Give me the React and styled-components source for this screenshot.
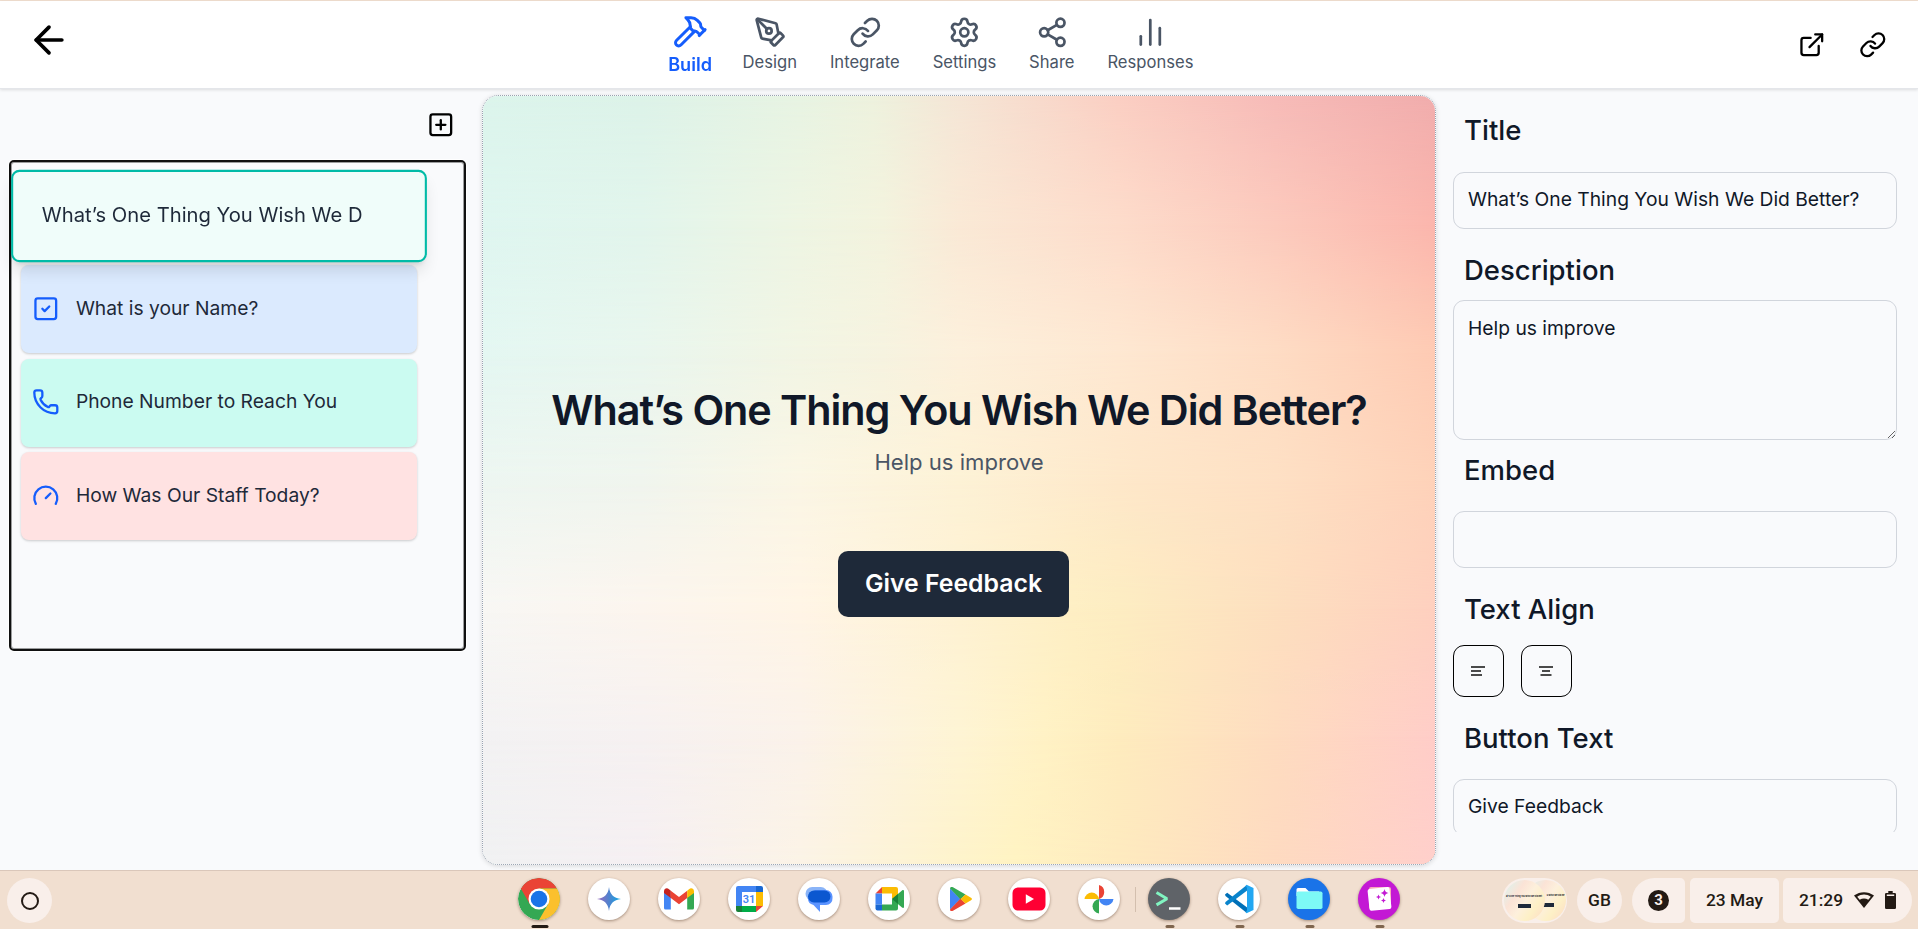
import React from 'react';
import styled, { createGlobalStyle, css } from 'styled-components';
import {
  ArrowLeft,
  ChartNoAxesColumn,
  ExternalLink,
  Gauge,
  Hammer,
  Link,
  PenTool,
  Phone,
  Settings,
  Share2,
  SquareCheck,
  SquarePlus,
} from 'lucide-react';

const GlobalStyle = createGlobalStyle`
  *, *::before, *::after { box-sizing: border-box; }
  body {
    margin: 0;
    background: #f9fafc;
    color: #101828;
    font-family: Inter, "Liberation Sans", sans-serif;
    overflow: hidden;
  }
`;

const Screen = styled.div`
  display: flex;
  flex-direction: column;
  width: 100%;
  height: 929px;
  border-top: 1px solid #f1dfd0;
`;

/* ---------- header ---------- */

const Header = styled.header`
  flex: none;
  display: grid;
  grid-template-columns: 1fr auto 1fr;
  height: 88px;
  background: #fff;
  border-bottom: 1px solid #e4e6ea;
  box-shadow: 0 1px 3px rgba(0, 0, 0, 0.12);
  position: relative;
`;

const BackLink = styled.a`
  display: flex;
  align-self: start;
  justify-self: start;
  margin: 17px 0 0 27px;
  color: #000;
`;

const Nav = styled.nav`
  display: flex;
  gap: 32.9px;
  padding-top: 15px;
  margin-right: 55px;
`;

const NavItem = styled.a`
  display: flex;
  flex-direction: column;
  align-items: center;
  align-self: flex-start;
  color: ${(p) => (p.$active ? '#155dfc' : '#4a5565')};
  font-size: 16.6px;
  font-weight: ${(p) => (p.$active ? 600 : 400)};
  line-height: 24px;
  transform: ${(p) => (p.$active ? 'scale(1.09)' : 'none')};

  svg { margin-bottom: ${(p) => (p.$active ? 2 : 1.5)}px; }
`;

const HeaderActions = styled.div`
  display: flex;
  justify-content: flex-end;
  gap: 33.4px;
  padding: 29.7px 31.5px 0 0;
  color: #000;
`;

/* ---------- workspace ---------- */

const Workspace = styled.main`
  flex: none;
  display: flex;
  align-items: flex-start;
  height: 781px;
`;

const Sidebar = styled.aside`
  width: 482px;
  padding: 21.7px 0 0 9px;
`;

const AddRow = styled.div`
  display: flex;
  justify-content: flex-end;
  height: 49.3px;
  padding-right: 27.7px;
  color: #000;
`;

const QuestionList = styled.div`
  display: flex;
  flex-direction: column;
  gap: 5.3px;
  width: 457px;
  height: 491px;
  padding: 10px 0 0 10px;
  border: 2px solid #101010;
  border-radius: 5px;
  box-shadow: 0 0 0 1px #fff, inset 0 0 0 1px rgba(16, 16, 16, 0.4);
`;

const Question = styled.div`
  flex: none;
  display: flex;
  align-items: center;
  gap: 16.3px;
  width: 396px;
  height: 88px;
  padding: 0 0 2.5px ${(p) => (p.$selected ? '27.3px' : '11px')};
  border-radius: 8px;
  background: ${(p) => p.$tone};
  color: #1e2939;
  font-size: 19.25px;
  box-shadow: 0 1px 3px rgba(0, 0, 0, 0.12), 0 1px 2px rgba(0, 0, 0, 0.08);

  svg { color: #155dfc; position: relative; top: 0.7px; }

  ${(p) =>
    p.$selected &&
    css`
      border: 2px solid #00bba7;
      transform: scale(1.05);
      box-shadow: 0 10px 15px -3px rgba(0, 0, 0, 0.12), 0 4px 6px -4px rgba(0, 0, 0, 0.12);
      z-index: 1;
    `}
`;

/* ---------- preview ---------- */

const Preview = styled.section`
  display: grid;
  width: 954px;
  height: 770px;
  margin-top: 6px;
  overflow: hidden;
  border: 1px dotted #9aa3b0;
  border-radius: 16px;
  box-shadow: 0 1px 5px rgba(0, 0, 0, 0.14);
`;

const Wash = styled.div`
  grid-area: 1 / 1;
  background: linear-gradient(to right, ${(p) => p.$colors.join(', ')});
  ${(p) =>
    p.$step > 0 &&
    css`
      mask-image: linear-gradient(
        to bottom,
        transparent ${((p.$step - 1) / 6) * 100}%,
        #000 ${(p.$step / 6) * 100}%
      );
    `}
`;

const PreviewContent = styled.div`
  grid-area: 1 / 1;
  display: flex;
  flex-direction: column;
  align-items: center;
  padding-top: 288.5px;
  position: relative;
`;

const PreviewTitle = styled.h1`
  margin: 0;
  font-size: 41.35px;
  font-weight: 600;
  line-height: 50px;
  letter-spacing: -0.0255em;
  color: #101828;
  white-space: nowrap;
`;

const PreviewText = styled.p`
  margin: 10px 0 0;
  font-size: 22.1px;
  line-height: 34px;
  color: #4a5565;
`;

const FeedbackButton = styled.button`
  width: 231px;
  height: 66px;
  margin: 72px 11px 0 0;
  padding-bottom: 2px;
  border: 0;
  border-radius: 10px;
  background: #1e2939;
  color: #fff;
  font: 600 24.8px Inter, "Liberation Sans", sans-serif;
`;

/* ---------- properties ---------- */

const Properties = styled.aside`
  width: 461px;
  height: 743px;
  padding: 23px 0 0 17px;
  overflow: hidden;
`;

const FieldTitle = styled.h2`
  height: 36px;
  margin: ${(p) => p.$top || 0}px 0 ${(p) => p.$gap}px 11px;
  font-size: 27.5px;
  font-weight: 500;
  line-height: 36px;
  color: #101828;
`;

const fieldStyle = css`
  display: block;
  width: 444px;
  border: 1px solid #d1d5dc;
  border-radius: 11px;
  outline: 0;
  background: transparent;
  color: #101828;
  font: 400 19.25px/28px Inter, "Liberation Sans", sans-serif;
`;

const TextInput = styled.input`
  ${fieldStyle}
  height: 57px;
  padding: 0 14px 3px;
`;

const TextArea = styled.textarea`
  ${fieldStyle}
  height: 140px;
  padding: 13px 14px;
  resize: vertical;
`;

const AlignGroup = styled.div`
  display: flex;
  gap: 17px;
`;

const AlignButton = styled.button`
  display: flex;
  align-items: center;
  justify-content: center;
  width: 51px;
  height: 52px;
  padding: 0 2px 0 0;
  border: 1px solid #000;
  border-radius: 11px;
  background: transparent;
`;

/* ---------- shelf ---------- */

const Shelf = styled.footer`
  flex: none;
  display: flex;
  align-items: flex-start;
  height: 59px;
  border-top: 1px solid #dac7ba;
  background: #f1dfd0;
  font-family: Roboto, "Liberation Sans", sans-serif;
  color: #231a14;
  position: relative;
`;

const Launcher = styled.div`
  display: grid;
  place-items: center;
  width: 45px;
  height: 45px;
  margin: 7px 0 0 7px;
  border-radius: 50%;
  background: #f9efea;

  &::after {
    content: '';
    width: 18px;
    height: 18px;
    border: 2px solid #231a14;
    border-radius: 50%;
  }
`;

const Apps = styled.div`
  display: flex;
  margin: 7px 0 0 466.3px;
`;

const AppIcon = styled.div`
  position: relative;
  width: 42px;
  height: 42px;
  margin-right: 28px;
  border-radius: 50%;
  background: ${(p) => p.$bg || '#fff'};
  box-shadow: 0 1px 3px rgba(70, 40, 20, 0.45);

  svg { display: block; border-radius: 50%; }

  ${(p) =>
    p.$mark &&
    css`
      &::after {
        content: '';
        position: absolute;
        left: calc(50% + 1px);
        bottom: -8px;
        width: ${p.$mark === 'wide' ? 17 : 9}px;
        height: 3px;
        border-radius: 2px;
        transform: translateX(-50%);
        background: ${p.$mark === 'wide' ? '#231a14' : '#80664f'};
      }
    `}
`;

const Separator = styled.div`
  width: 1px;
  height: 25px;
  margin: 9px 12px 0 -13px;
  background: #d3bfae;
`;

const Tray = styled.div`
  display: flex;
  margin: 7px 6px 0 auto;
  font-size: 17.4px;
  font-weight: 500;
`;

const TrayPill = styled.div`
  display: flex;
  align-items: center;
  justify-content: center;
  gap: ${(p) => p.$gap || 0}px;
  width: ${(p) => p.$w}px;
  height: 45px;
  margin-left: ${(p) => p.$ml || 0}px;
  padding-bottom: 1px;
  border-radius: ${(p) => p.$r};
  background: #f9efea;
`;

const Count = styled.span`
  display: grid;
  place-items: center;
  width: 21px;
  height: 21px;
  border-radius: 50%;
  background: #231a14;
  color: #f9efea;
  font-size: 15px;
  font-weight: 700;
`;

const Thumb = styled.div`
  flex: none;
  display: flex;
  flex-direction: column;
  align-items: ${(p) => (p.$back ? 'flex-end' : 'center')};
  justify-content: center;
  gap: 6px;
  width: 41px;
  height: 41px;
  padding: ${(p) => (p.$back ? '0 1px 0 0' : '3px 0 0')};
  margin-left: ${(p) => (p.$back ? '-20px' : 0)};
  z-index: ${(p) => (p.$back ? 0 : 1)};
  border-radius: 50%;
  background: linear-gradient(125deg, #dcf3ee 5%, #fbe3d6 32%, #fdf0dc 52%, #fdf0c6 72%, #fdd9c6 100%);
  font: 700 2.1px/3px Inter, sans-serif;
  color: #101828;
  white-space: nowrap;

  &::after {
    content: '';
    width: 13px;
    height: 4px;
    margin-right: ${(p) => (p.$back ? '11px' : 0)};
    background: #1e2939;
  }
`;

const washRows = [
  ['#dcf5ec 0%', '#ddf3e9 16.7%', '#e8f4e3 33.3%', '#eef2de 41%', '#f5e6d6 50%', '#fbcfc3 66.7%', '#f7bbb8 83.3%', '#f1adad 100%'],
  ['#dff6f0 0%', '#e2f5ec 16.7%', '#eef5e3 33.3%', '#f3f3de 42%', '#fae9d6 50%', '#fddccb 66.7%', '#fccabd 83.3%', '#fbb6ad 100%'],
  ['#e4f7f2 0%', '#e9f6ee 16.7%', '#f2f5e4 33.3%', '#f6f3e0 42%', '#fcf0dc 50%', '#fee8d2 66.7%', '#fedcc4 83.3%', '#fecbb4 100%'],
  ['#edf6f1', '#f0f5ee', '#fbf6e5', '#fdf2d6', '#fee8ca', '#fee0c4', '#fed2b9'],
  ['#f8f7f4 0%', '#fcf5ee 16.7%', '#fff5e6 33.3%', '#fef2d3 50%', '#feefc4 62%', '#fdedc2 66.7%', '#fddfbf 83.3%', '#fed0bf 100%'],
  ['#f3f2f3 0%', '#f6f1f1 16.7%', '#fbf2ea 33.3%', '#fef4d4 50%', '#fff2c5 59%', '#feecbe 66.7%', '#fedcc0 83.3%', '#ffcdc8 100%'],
  ['#f0f1f2 0%', '#f5eff2 16.7%', '#fbf3e6 33.3%', '#fef3cb 50%', '#fff3c2 56%', '#feeabf 66.7%', '#fedac0 83.3%', '#ffcfcb 100%'],
];

const navItems = [
  { label: 'Build', Icon: Hammer, active: true },
  { label: 'Design', Icon: PenTool },
  { label: 'Integrate', Icon: Link },
  { label: 'Settings', Icon: Settings },
  { label: 'Share', Icon: Share2 },
  { label: 'Responses', Icon: ChartNoAxesColumn },
];

const questions = [
  { text: 'What’s One Thing You Wish We D', tone: '#f0fdfa', selected: true },
  { text: 'What is your Name?', tone: '#dbeafe', Icon: SquareCheck },
  { text: 'Phone Number to Reach You', tone: '#cbfbf1', Icon: Phone },
  { text: 'How Was Our Staff Today?', tone: '#ffe2e2', Icon: Gauge },
];

const Glyph = ({ children }) => (
  <svg width="42" height="42" viewBox="0 0 42 42">{children}</svg>
);

const ChromeGlyph = () => (
  <Glyph>
    <circle cx="21" cy="21" r="21" fill="#34a853" />
    <path d="M2.8 10.5A21 21 0 0 1 39.2 10.5H21L11.9 26.2Z" fill="#ea4335" />
    <path d="M39.2 10.5A21 21 0 0 1 21 42L30.1 26.2 21 10.5Z" fill="#fbc02d" />
    <circle cx="21" cy="21" r="10.5" fill="#fff" />
    <circle cx="21" cy="21" r="8.3" fill="#1a73e8" />
  </Glyph>
);

const GeminiGlyph = () => (
  <Glyph>
    <defs>
      <linearGradient id="spark" x1="0" y1="0" x2="1" y2="0">
        <stop offset="0.1" stopColor="#8d6fc0" />
        <stop offset="0.5" stopColor="#4f83cf" />
        <stop offset="0.9" stopColor="#1ba3e0" />
      </linearGradient>
    </defs>
    <path d="M21 9C22 16.500 25.500 20 33 21C25.500 22 22 25.500 21 33C20 25.500 16.500 22 9 21C16.500 20 20 16.500 21 9Z" fill="url(#spark)" />
  </Glyph>
);

const MailGlyph = () => (
  <Glyph>
    <path d="M6 14V30a1.500 1.500 0 0 0 1.500 1.500H12.800V19Z" fill="#4285f4" />
    <path d="M36 14V30a1.500 1.500 0 0 1-1.500 1.500H29.200V19Z" fill="#34a853" />
    <path d="M12.800 12.800 21 19 29.200 12.800V20L21 26.300 12.800 20Z" fill="#ea4335" />
    <path d="M29.200 20V12.800L31 11.200C33 9.300 36 10.500 36 13.500V15Z" fill="#fbbc04" />
    <path d="M12.800 20V12.800L11 11.200C9 9.300 6 10.500 6 13.500V15Z" fill="#c5221f" />
  </Glyph>
);

const CalendarGlyph = () => (
  <Glyph>
    <path d="M8 10a2 2 0 0 1 2-2H28V14H14V28H8Z" fill="#4285f4" />
    <path d="M28 8H33a2 2 0 0 1 2 2V14H28Z" fill="#1967d2" />
    <path d="M28 14H35V28H28Z" fill="#fbbc04" />
    <path d="M14 28H28V34H14Z" fill="#00ac47" />
    <path d="M8 28H14V34H10a2 2 0 0 1-2-2Z" fill="#188038" />
    <path d="M28 28H35L28 34Z" fill="#ea4335" />
    <path d="M14 14H28V28H14Z" fill="#fff" />
    <text x="21" y="25.200" textAnchor="middle" fontFamily="Roboto, sans-serif" fontSize="11" fontWeight="600" fill="#4285f4">31</text>
  </Glyph>
);

const MessagesGlyph = () => (
  <Glyph>
    <rect x="7.500" y="9" width="22" height="13.500" rx="6.700" fill="#8ab4f8" />
    <path d="M17 12H28a6.500 6.500 0 0 1 6.500 6.500V20A6.500 6.500 0 0 1 28 27H22V34L15.500 27A7 7 0 0 1 10 20Z" fill="#5c94ff" />
    <rect x="10" y="12.500" width="22.500" height="12" rx="6" fill="#0b57d0" />
  </Glyph>
);

const MeetGlyph = () => (
  <Glyph>
    <path d="M7.500 15.500 14 9V15.500Z" fill="#ea4335" />
    <path d="M14 9H28a2 2 0 0 1 2 2V18L24 21V15.500H14Z" fill="#fbbc04" />
    <path d="M7.500 15.500H14V26.500H7.500Z" fill="#4285f4" />
    <path d="M7.500 26.500H14V32.500H9.500a2 2 0 0 1-2-2Z" fill="#1967d2" />
    <path d="M14 26.500H24V21L30 24V30.500a2 2 0 0 1-2 2H14Z" fill="#34a853" />
    <path d="M24 21 34 12.500C35 11.800 36 12 36 13V29C36 30 35 30.200 34 29.500Z" fill="#34a853" />
    <path d="M24 21 30 16V26Z" fill="#188038" />
  </Glyph>
);

const PlayGlyph = () => (
  <Glyph>
    <path d="M12 10.500V31.500L22.500 21Z" fill="#4285f4" />
    <path d="M12 10.500C12 9 13.500 8.500 15 9.300L27.500 16.500 22.500 21.500Z" fill="#34a853" />
    <path d="M12 31.500C12 33 13.500 33.500 15 32.700L27.500 25.500 22.500 20.500Z" fill="#ea4335" />
    <path d="M27.500 16.500 33 19.700C34.200 20.400 34.200 21.600 33 22.300L27.500 25.500 22.500 21Z" fill="#fbbc04" />
  </Glyph>
);

const VideoGlyph = () => (
  <Glyph>
    <rect x="4.500" y="9.500" width="33" height="23" rx="5.500" fill="#ff0033" />
    <path d="M17.800 16.200V25.800L26 21Z" fill="#fff" />
  </Glyph>
);

const PhotosGlyph = () => (
  <Glyph>
    <path d="M21 21V7A7.300 7.300 0 0 1 21 21Z" fill="#ea4335" />
    <path d="M21 21H35.500A7.300 7.300 0 0 1 21 21Z" fill="#4285f4" />
    <path d="M21 21V35.500A7.300 7.300 0 0 1 21 21Z" fill="#34a853" />
    <path d="M21 21H6.500A7.300 7.300 0 0 1 21 21Z" fill="#fbbc04" />
  </Glyph>
);

const TerminalGlyph = () => (
  <Glyph>
    <path d="M8.500 14.500 19 20.700 8.500 26.900" fill="none" stroke="#81f4c1" strokeWidth="3" strokeLinejoin="bevel" />
    <path d="M21 30.500H32.500" stroke="#fff" strokeWidth="2.600" />
  </Glyph>
);

const EditorGlyph = () => (
  <Glyph>
    <path d="M7 16.500 9.200 14.800 30.500 30.500 28.800 35 7.500 18Z" fill="#0070b8" />
    <path d="M7 25.500 9.200 27.500 30.500 11.500 28.800 7 7.500 24Z" fill="#0a84cc" />
    <path d="M28.500 6.700 35.500 10V32L28.500 35.300 27.500 34Q29 33.500 29 31.500V10.500Q29 8.500 27.500 8Z" fill="#22a7f2" />
  </Glyph>
);

const FilesGlyph = () => (
  <Glyph>
    <path d="M8.500 11.500a1.500 1.500 0 0 1 1.500-1.500H17.500L21 13.500H31V18H8.500Z" fill="#fff" />
    <rect x="8.500" y="13.500" width="26" height="17.500" rx="1.800" fill="#7df9f6" />
  </Glyph>
);

const GalleryGlyph = () => (
  <Glyph>
    <rect x="11" y="9" width="22" height="22" rx="2" fill="#f8a9b9" />
    <rect x="10.500" y="10" width="22" height="22" rx="2" fill="#fff" transform="rotate(-6 21 21)" />
    <path d="M26.500 11Q27 14.500 30.500 15Q27 15.500 26.500 19Q26 15.500 22.500 15Q26 14.500 26.500 11ZM20.500 16.500Q20.800 18.700 23 19Q20.800 19.300 20.500 21.500Q20.200 19.300 18 19Q20.200 18.700 20.500 16.500ZM25.500 20Q25.800 22.200 28 22.500Q25.800 22.800 25.500 25Q25.200 22.800 23 22.500Q25.200 22.200 25.500 20Z" fill="#c319d4" />
  </Glyph>
);

const AlignGlyph = ({ centered }) => (
  <svg width="14" height="10" viewBox="0 0 14 10" fill="#4a4a4a">
    <rect x="0" y="0" width="14" height="2" />
    <rect x={centered ? 3 : 0} y="4" width={centered ? 8 : 10} height="2" />
    <rect x={centered ? 1.5 : 0} y="8" width="11" height="2" />
  </svg>
);

const WifiGlyph = () => (
  <svg width="20" height="16" viewBox="0 0 20 16">
    <path d="M0 3.500C6 -1 14 -1 20 3.500L10 16Z" fill="#231a14" />
    <path d="M3.200 4.700C7.500 1.700 12.500 1.700 16.800 4.700L14.300 7.800C11.600 6 8.400 6 5.700 7.800Z" fill="#f9efea" />
  </svg>
);

const BatteryGlyph = () => (
  <svg width="11" height="18" viewBox="0 0 11 18">
    <path d="M3.300 0H7.700V2H9.800Q11 2 11 3.200V16.800Q11 18 9.800 18H1.200Q0 18 0 16.800V3.200Q0 2 1.200 2H3.300Z" fill="#231a14" />
    <rect x="1.800" y="3.500" width="7.400" height="1.500" fill="#f9efea" />
  </svg>
);

export default function App() {
  return (
    <Screen>
      <GlobalStyle />
      <Header>
        <BackLink>
          <ArrowLeft size={44} />
        </BackLink>
        <Nav>
          {navItems.map(({ label, Icon, active }) => (
            <NavItem key={label} $active={active}>
              <Icon size={32.6} />
              {label}
            </NavItem>
          ))}
        </Nav>
        <HeaderActions>
          <ExternalLink size={27.6} />
          <Link size={27.6} />
        </HeaderActions>
      </Header>

      <Workspace>
        <Sidebar>
          <AddRow>
            <SquarePlus size={27.6} />
          </AddRow>
          <QuestionList>
            {questions.map(({ text, tone, Icon, selected }) => (
              <Question key={text} $tone={tone} $selected={selected}>
                {Icon && <Icon size={27.6} />}
                {text}
              </Question>
            ))}
          </QuestionList>
        </Sidebar>

        <Preview>
          {washRows.map((colors, i) => (
            <Wash key={i} $colors={colors} $step={i} />
          ))}
          <PreviewContent>
            <PreviewTitle>What’s One Thing You Wish We Did Better?</PreviewTitle>
            <PreviewText>Help us improve</PreviewText>
            <FeedbackButton>Give Feedback</FeedbackButton>
          </PreviewContent>
        </Preview>

        <Properties>
          <FieldTitle $gap={24}>Title</FieldTitle>
          <TextInput defaultValue="What’s One Thing You Wish We Did Better?" />
          <FieldTitle $top={23} $gap={12}>Description</FieldTitle>
          <TextArea defaultValue="Help us improve" />
          <FieldTitle $top={12} $gap={23}>Embed</FieldTitle>
          <TextInput />
          <FieldTitle $top={23} $gap={18}>Text Align</FieldTitle>
          <AlignGroup>
            <AlignButton>
              <AlignGlyph />
            </AlignButton>
            <AlignButton>
              <AlignGlyph centered />
            </AlignButton>
          </AlignGroup>
          <FieldTitle $top={23} $gap={23}>Button Text</FieldTitle>
          <TextInput defaultValue="Give Feedback" />
        </Properties>
      </Workspace>

      <Shelf>
        <Launcher />
        <Apps>
          <AppIcon $mark="wide"><ChromeGlyph /></AppIcon>
          <AppIcon><GeminiGlyph /></AppIcon>
          <AppIcon><MailGlyph /></AppIcon>
          <AppIcon><CalendarGlyph /></AppIcon>
          <AppIcon><MessagesGlyph /></AppIcon>
          <AppIcon><MeetGlyph /></AppIcon>
          <AppIcon><PlayGlyph /></AppIcon>
          <AppIcon><VideoGlyph /></AppIcon>
          <AppIcon><PhotosGlyph /></AppIcon>
          <Separator />
          <AppIcon $bg="#5f6368" $mark="small"><TerminalGlyph /></AppIcon>
          <AppIcon $mark="small"><EditorGlyph /></AppIcon>
          <AppIcon $bg="#1a73e8" $mark="small"><FilesGlyph /></AppIcon>
          <AppIcon $bg="#c319d4" $mark="small"><GalleryGlyph /></AppIcon>
        </Apps>
        <Tray>
          <TrayPill $w={65} $r="23px">
            <Thumb>at’s One Thing You Wish We Did Bet</Thumb>
            <Thumb $back>u Wish We Did Be</Thumb>
          </TrayPill>
          <TrayPill $w={45} $ml={10} $r="50%">GB</TrayPill>
          <TrayPill $w={53} $ml={10} $r="23px 5px 5px 23px">
            <Count>3</Count>
          </TrayPill>
          <TrayPill $w={89} $ml={5} $r="5px">23 May</TrayPill>
          <TrayPill $w={129} $ml={4} $gap={11} $r="5px 23px 23px 5px">
            21:29
            <WifiGlyph />
            <BatteryGlyph />
          </TrayPill>
        </Tray>
      </Shelf>
    </Screen>
  );
}
